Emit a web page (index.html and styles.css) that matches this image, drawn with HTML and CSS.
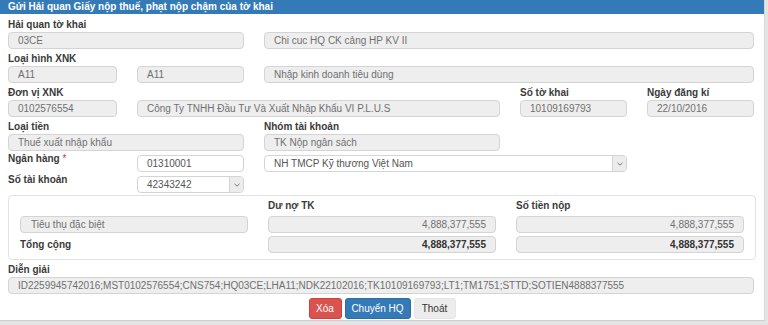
FILE: index.html
```html
<!DOCTYPE html>
<html lang="vi">
<head>
    <meta charset="UTF-8">
    <title>Gửi Hải quan Giấy nộp thuế</title>
    <link rel="stylesheet" href="styles.css">
</head>
<body>

<div class="panel">
    <div class="panel-title">Gửi Hải quan Giấy nộp thuế, phạt nộp chậm của tờ khai</div>

    <div class="panel-body">
        <!-- Hải quan -->
        <div class="grid label-row">
            <label class="c1">Hải quan tờ khai</label>
        </div>
        <div class="grid input-row">
            <div class="field s12">03CE</div>
            <div class="field s35">Chi cuc HQ CK cảng HP KV II</div>
        </div>

        <!-- Loại hình -->
        <div class="grid label-row">
            <label class="c1">Loại hình XNK</label>
        </div>
        <div class="grid input-row">
            <div class="field c1">A11</div>
            <div class="field c2">A11</div>
            <div class="field s35">Nhập kinh doanh tiêu dùng</div>
        </div>

        <!-- Đơn vị -->
        <div class="grid label-row">
            <label class="c1">Đơn vị XNK</label>
            <label class="c4">Số tờ khai</label>
            <label class="c5">Ngày đăng kí</label>
        </div>
        <div class="grid input-row">
            <div class="field c1">0102576554</div>
            <div class="field s23">Công Ty TNHH Đầu Tư Và Xuất Nhập Khẩu VI P.L.U.S</div>
            <div class="field c4">10109169793</div>
            <div class="field c5">22/10/2016</div>
        </div>

        <!-- Loại tiền -->
        <div class="grid label-row">
            <label class="c1">Loại tiền</label>
            <label class="c3">Nhóm tài khoản</label>
        </div>
        <div class="grid input-row">
            <div class="field s12">Thuế xuất nhập khẩu</div>
            <div class="field c3">TK Nộp ngân sách</div>
        </div>

        <!-- Ngân hàng -->
        <div class="grid input-row spaced">
            <label class="c1 side-label">Ngân hàng <span class="req">*</span></label>
            <div class="field editable c2">01310001</div>
            <div class="field editable select s34">
                <span>NH TMCP Kỹ thương Việt Nam</span>
                <span class="caret"><svg width="8" height="6" viewBox="0 0 8 6"><path d="M1.5 1.8 L4 4.2 L6.5 1.8" fill="none" stroke="#777" stroke-width="1"/></svg></span>
            </div>
        </div>
        <div class="grid input-row spaced">
            <label class="c1 side-label">Số tài khoản</label>
            <div class="field editable select c2">
                <span>42343242</span>
                <span class="caret"><svg width="8" height="6" viewBox="0 0 8 6"><path d="M1.5 1.8 L4 4.2 L6.5 1.8" fill="none" stroke="#777" stroke-width="1"/></svg></span>
            </div>
        </div>

        <!-- Tổng hợp số tiền -->
        <div class="sum-box">
            <div></div>
            <label>Dư nợ TK</label>
            <label>Số tiền nộp</label>

            <div class="field inset">Tiêu thụ đặc biệt</div>
            <div class="field money">4,888,377,555</div>
            <div class="field money">4,888,377,555</div>

            <label class="total-label">Tổng cộng</label>
            <div class="field money total">4,888,377,555</div>
            <div class="field money total">4,888,377,555</div>
        </div>

        <!-- Diễn giải -->
        <div class="grid label-row">
            <label class="c1">Diễn giải</label>
        </div>
        <div class="grid input-row">
            <div class="field s15">ID2259945742016;MST0102576554;CNS754;HQ03CE;LHA11;NDK22102016;TK10109169793;LT1;TM1751;STTD;SOTIEN4888377555</div>
        </div>

        <div class="actions">
            <button class="btn btn-danger">Xóa</button>
            <button class="btn btn-primary">Chuyển HQ</button>
            <button class="btn btn-default">Thoát</button>
        </div>
    </div>
</div>

</body>
</html>
```

FILE: styles.css
```css
* {
    margin: 0;
    padding: 0;
    box-sizing: border-box;
}

body {
    font-family: "Liberation Sans", Arial, sans-serif;
    font-size: 10px;
    background-color: #e4e4e4;
    color: #333;
}

.panel {
    width: 765px;
    height: 321px;
    background-color: white;
    border-right: 1px solid #d6d6d6;
    border-bottom: 1px solid #cfcfcf;
}

.panel-title {
    height: 14px;
    line-height: 14px;
    padding-left: 8px;
    background-color: #337ab7;
    color: white;
    font-weight: bold;
    font-size: 10px;
}

.panel-body {
    padding: 0 8px;
}

/* Shared 5-column grid */
.grid {
    display: grid;
    grid-template-columns: 109px 107px 236px 107px 107px;
    column-gap: 20px;
}

.c1 { grid-column: 1; }
.c2 { grid-column: 2; }
.c3 { grid-column: 3; }
.c4 { grid-column: 4; }
.c5 { grid-column: 5; }
.s12 { grid-column: 1 / 3; }
.s23 { grid-column: 2 / 4; }
.s34 { grid-column: 3 / 5; }
.s35 { grid-column: 3 / 6; }
.s15 { grid-column: 1 / 6; }

label {
    font-weight: bold;
    font-size: 10px;
    color: #3a3a3a;
    white-space: nowrap;
}

.req {
    color: #c33;
    font-weight: normal;
}

.label-row {
    height: 17px;
    padding-top: 3px;
    line-height: 14px;
}

.label-row:first-child {
    height: 18px;
    padding-top: 4px;
}

.input-row {
    height: 17px;
}

.input-row.spaced {
    margin-top: 4px;
}

.side-label {
    line-height: 12px;
    margin-top: -2px;
}

.field {
    height: 17px;
    line-height: 15px;
    padding: 0 9px;
    background-color: #eeeeee;
    border: 1px solid #d4d4d4;
    border-radius: 4px;
    color: #707070;
    white-space: nowrap;
    overflow: hidden;
}

.field.editable {
    background-color: white;
    color: #555;
}

.field.select {
    display: flex;
    justify-content: space-between;
    padding-right: 0;
}

.caret {
    width: 14px;
    height: 15px;
    display: flex;
    align-items: center;
    justify-content: center;
    background-color: #ececec;
    border-left: 1px solid #d4d4d4;
}

/* Sum box */
.sum-box {
    margin-top: 2px;
    height: 65px;
    border: 1px solid #e2e2e2;
    border-radius: 4px;
    padding: 3px 10px 0 11px;
    display: grid;
    grid-template-columns: 228px 228px 228px;
    grid-template-rows: 14px 17px 17px;
    column-gap: 20px;
    row-gap: 3px;
    align-items: center;
}

.sum-box label {
    line-height: 14px;
}

.field.inset {
    padding-left: 10px;
}

.field.money {
    text-align: right;
    padding-right: 9px;
}

.field.total {
    font-weight: bold;
    color: #333;
}

/* Buttons */
.actions {
    display: flex;
    justify-content: center;
    gap: 3px;
    margin-top: 4px;
}

.btn {
    height: 21px;
    padding: 0;
    border-radius: 3px;
    border: 1px solid transparent;
    font-family: "Liberation Sans", Arial, sans-serif;
    font-size: 10px;
    white-space: nowrap;
    cursor: pointer;
}

.btn-danger {
    width: 33px;
    background-color: #d9534f;
    border-color: #d43f3a;
    color: white;
}

.btn-primary {
    width: 66px;
    background-color: #337ab7;
    border-color: #2e6da4;
    color: white;
}

.btn-default {
    width: 42px;
    background-color: #ececec;
    border-color: #e6e6e6;
    color: #333;
}
```
